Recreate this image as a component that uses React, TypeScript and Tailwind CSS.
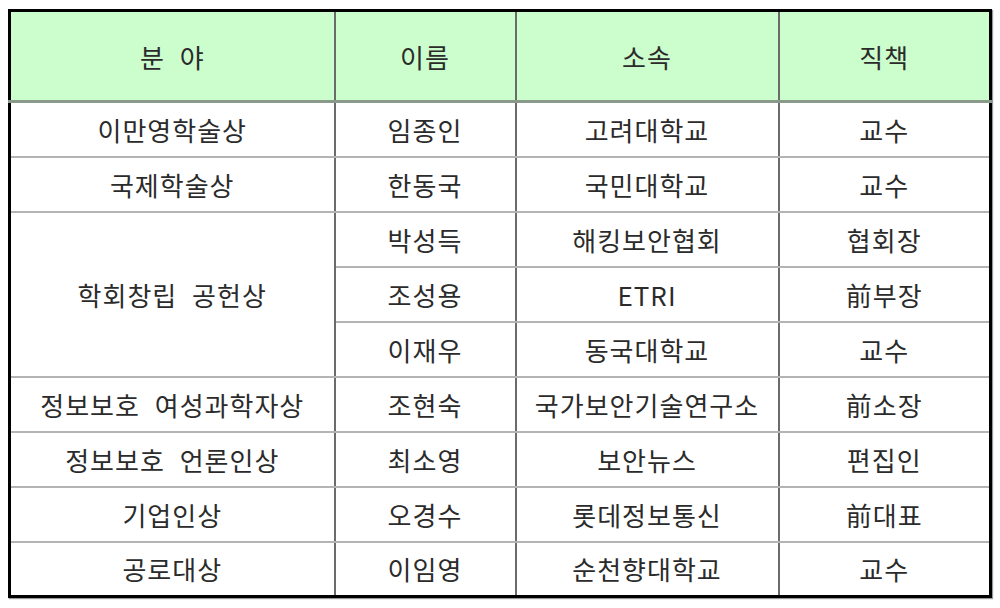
import React from "react";

type Row = { field?: string; span?: number; name: string; org: string; title: string };

const rows: Row[] = [
  { field: "이만영학술상", name: "임종인", org: "고려대학교", title: "교수" },
  { field: "국제학술상", name: "한동국", org: "국민대학교", title: "교수" },
  { field: "학회창립 공헌상", span: 3, name: "박성득", org: "해킹보안협회", title: "협회장" },
  { name: "조성용", org: "ETRI", title: "前부장" },
  { name: "이재우", org: "동국대학교", title: "교수" },
  { field: "정보보호 여성과학자상", name: "조현숙", org: "국가보안기술연구소", title: "前소장" },
  { field: "정보보호 언론인상", name: "최소영", org: "보안뉴스", title: "편집인" },
  { field: "기업인상", name: "오경수", org: "롯데정보통신", title: "前대표" },
  { field: "공로대상", name: "이임영", org: "순천향대학교", title: "교수" },
];

const cell = "border-x-2 border-x-[#6b6b6b] border-y-2 border-y-[#b4b4b4] text-center align-middle p-0";

export default function App() {
  return (
    <div
      className="w-[1000px] h-[608px] bg-white pl-[8px] pt-[9px] text-[#2b2b2b] text-[26px] tracking-[1px] [word-spacing:8px]"
      style={{ fontFamily: '"Noto Sans CJK KR", "Noto Sans", sans-serif' }}
    >
      <table className="w-[981px] border-collapse border-[3px] border-black table-fixed shadow-[1px_1px_1px_#999]">
        <colgroup>
          <col className="w-[325px]" />
          <col className="w-[181px]" />
          <col className="w-[263px]" />
          <col className="w-[212px]" />
        </colgroup>
        <thead>
          <tr className="h-[91px] bg-[#ccfdcc]">
            {["분 야", "이름", "소속", "직책"].map((h) => (
              <th key={h} className={`${cell} font-normal border-b-[3px] border-b-[#8a9a8a]`}>
                {h}
              </th>
            ))}
          </tr>
        </thead>
        <tbody>
          {rows.map((r, i) => (
            <tr key={i} className="h-[55px]">
              {r.field && (
                <td rowSpan={r.span ?? 1} className={cell}>
                  {r.field}
                </td>
              )}
              <td className={cell}>{r.name}</td>
              <td className={cell}>{r.org}</td>
              <td className={cell}>{r.title}</td>
            </tr>
          ))}
        </tbody>
      </table>
    </div>
  );
}
